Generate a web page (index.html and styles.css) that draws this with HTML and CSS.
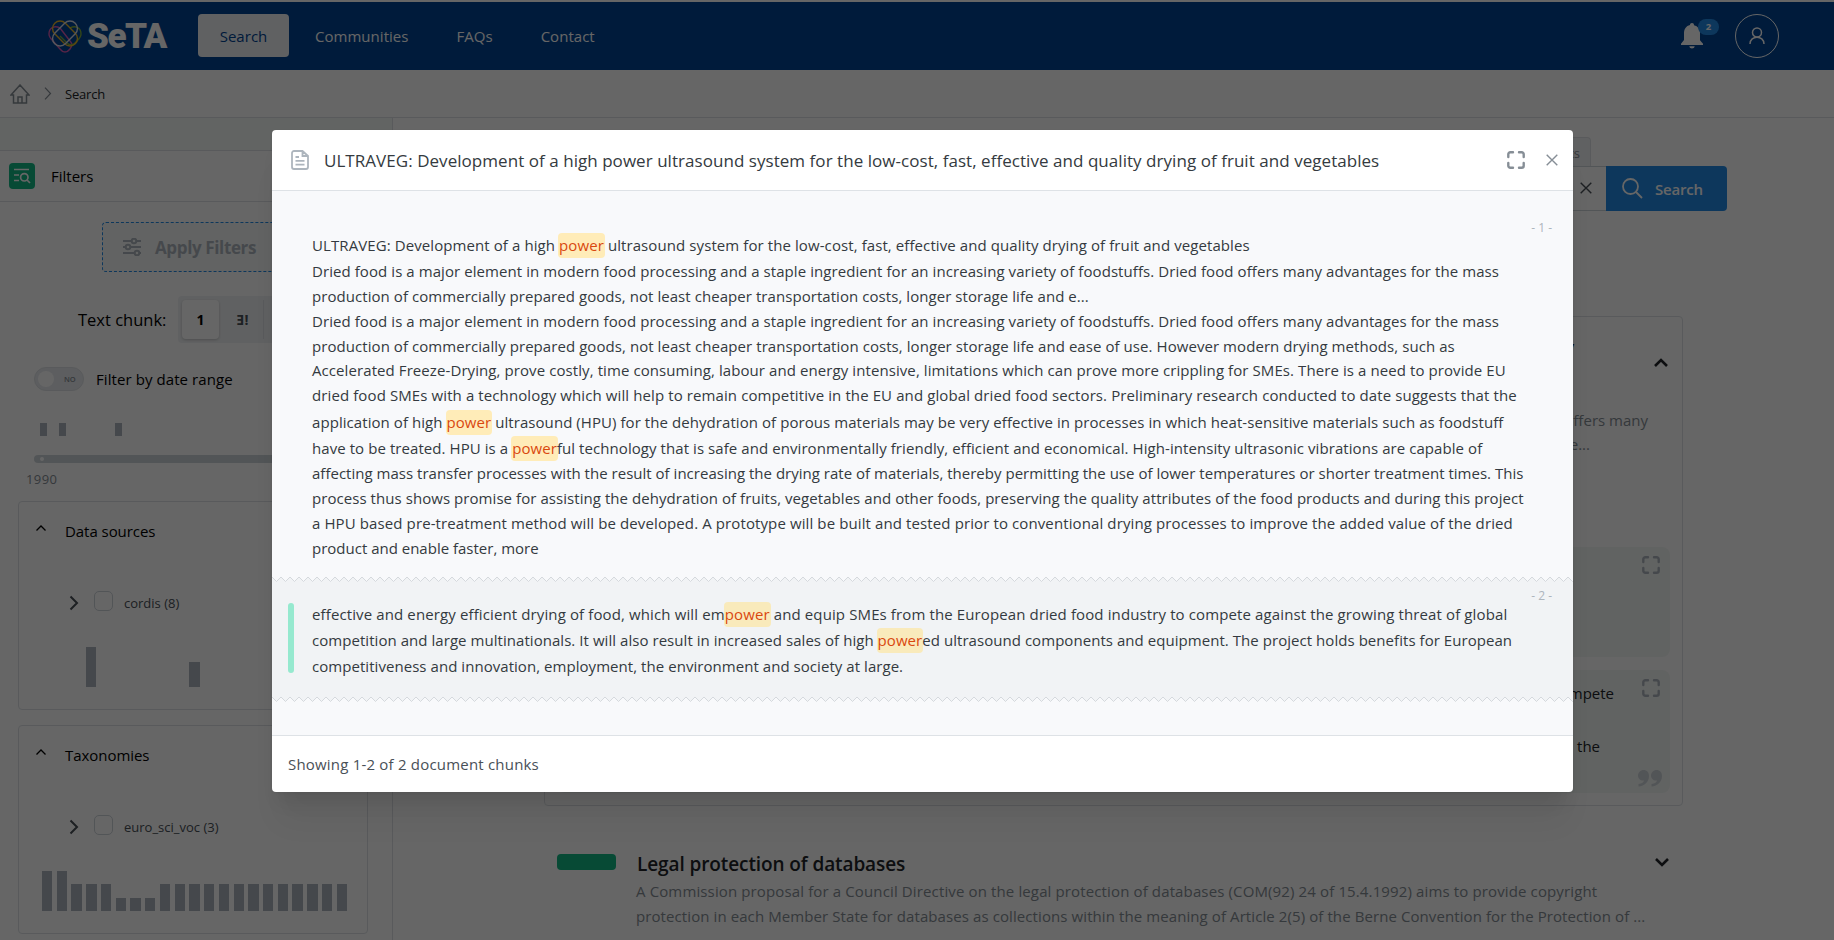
FILE: index.html
```html
<!DOCTYPE html>
<html lang="en">
<head>
<meta charset="utf-8">
<title>SeTA - Search</title>
<link rel="stylesheet" href="styles.css">
</head>
<body>
<svg width="0" height="0" class="defs" aria-hidden="true">
  <defs>
    <symbol id="expand" viewBox="0 0 18 18"><path d="M1.3 6V3.3a2 2 0 0 1 2-2H6M12 1.3h2.7a2 2 0 0 1 2 2V6M16.700 12v2.700a2 2 0 0 1-2 2H12M6 16.700H3.300a2 2 0 0 1-2-2V12" fill="none" stroke="currentColor" stroke-width="2.4" stroke-linecap="round"/></symbol>
    <symbol id="chev-up" viewBox="0 0 12 8"><path d="M1.500 6.500 6 2l4.500 4.500" fill="none" stroke="currentColor" stroke-width="1.300"/></symbol>
    <symbol id="chev-right" viewBox="0 0 10 16"><path d="M1.500 1.500 8 8l-6.500 6.500" fill="none" stroke="currentColor" stroke-width="2"/></symbol>
    <symbol id="cross" viewBox="0 0 12 12"><path d="M.7.7l10.600 10.600M11.300.7.7 11.300" fill="none" stroke="currentColor" stroke-width="1.400"/></symbol>
    <pattern id="zig" width="9" height="8" patternUnits="userSpaceOnUse"><path d="M-1 1.500 0 2l4.500 4.500L9 2l1 1" fill="none" stroke="#d5d9dd" stroke-width="1"/></pattern>
    <pattern id="fill-grey" width="9" height="8" patternUnits="userSpaceOnUse"><path d="M0 8V2l4.500 4.500L9 2v6z" fill="#f1f3f5"/></pattern>
    <pattern id="fill-light" width="9" height="8" patternUnits="userSpaceOnUse"><path d="M0 8V2l4.500 4.500L9 2v6z" fill="#f8f9fb"/></pattern>
  </defs>
</svg>
<div class="app">
  <header class="topbar">
    <div class="brand">
      <svg class="knot" viewBox="0 0 34 34" fill="none" stroke-width="1.400">
        <path d="M12 8C6 5 1 8 1 14c0 3 2 5 4 7l7 8c3 4 7 4 10 0 3-4 2-6 0-8L12 8" stroke="#d65bb0"/>
        <path d="M22 8c6-3 11 0 11 6 0 3-2 5-4 7-3 4-7 5-10 2l-7-7" stroke="#7fae3c"/>
        <rect x="2.500" y="6" width="29" height="15" rx="7.500" transform="rotate(45 17 13.500)" stroke="#e5b32c"/>
        <rect x="2.500" y="6" width="29" height="15" rx="7.500" transform="rotate(-45 17 13.500)" stroke="#d9dde6"/>
      </svg>
      <span class="wordmark">SeTA</span>
    </div>
    <nav class="nav">
      <a class="nav-item active">Search</a>
      <a class="nav-item">Communities</a>
      <a class="nav-item">FAQs</a>
      <a class="nav-item">Contact</a>
    </nav>
    <div class="account">
      <div class="bell">
        <svg viewBox="0 0 22 26" width="22" height="26"><path d="M11 0c1.300 0 2 .8 2 2.200 4 1 6 4 6 8v7l3 3.500V22H0v-1.300L3 17v-7c0-4 2-7 6-8C9 .8 9.700 0 11 0zM8.300 23.300h5.400c-.5 3-4.900 3-5.400 0z" fill="#fff"/></svg>
        <span class="count">2</span>
      </div>
      <div class="avatar"><svg viewBox="0 0 16 18" width="16" height="18" fill="none" stroke="#fff" stroke-width="1.500"><circle cx="8" cy="5.500" r="4.500"/><path d="M1 17c0-9 14-9 14 0"/></svg></div>
    </div>
  </header>
  <div class="crumbs">
    <svg viewBox="0 0 20 20" width="20" height="20" fill="none" stroke="#868e96" stroke-width="1.500"><path d="M10 1 1 11h2.500v8h13v-8H19zM8 19v-6h4v6"/></svg>
    <svg class="sep" viewBox="0 0 8 13" width="8" height="13" fill="none" stroke="#868e96" stroke-width="1.200"><path d="m1 .7 5.500 5.800L1 12.300"/></svg>
    <span>Search</span>
  </div>
  <div class="columns">
    <aside class="sidebar">
      <div class="side-top"></div>
      <div class="side-head">
        <span class="filter-badge"><svg viewBox="0 0 18 16" width="18" height="16" fill="none" stroke="#fff" stroke-width="1.700"><path d="M1 1.500h15M1 7h5M1 12.500h5"/><circle cx="11.300" cy="9.300" r="3.700"/><path d="m14 12 3 3"/></svg></span>
        <span>Filters</span>
      </div>
      <div class="apply">
        <svg viewBox="0 0 18 18" width="18" height="18" fill="none" stroke="currentColor" stroke-width="2"><path d="M0 3h8M14 3h4M0 9h2M8 9h10M0 15h11M17 15h1"/><circle cx="11" cy="3" r="2.300"/><circle cx="5" cy="9" r="2.300"/><circle cx="14" cy="15" r="2.300"/></svg>
        <span>Apply Filters</span>
      </div>
      <div class="chunk-row">
        <span class="chunk-label">Text chunk:</span>
        <div class="segmented"><span class="seg on">1</span><span class="seg">Ǝ!</span><span class="seg last"></span></div>
      </div>
      <div class="date-row"><span class="toggle"><i></i>NO</span><span class="date-label">Filter by date range</span></div>
      <div class="histo"><i class="h1"></i><i class="h2"></i><i class="h3"></i></div>
      <div class="track"><i></i></div>
      <div class="year">1990</div>
      <section class="panel">
        <div class="panel-head"><svg width="12" height="8"><use href="#chev-up"/></svg><span>Data sources</span></div>
        <div class="tree"><svg width="10" height="16"><use href="#chev-right"/></svg><i></i><span>cordis (8)</span></div>
        <div class="bars sparse"><i class="tall"></i><i class="mid"></i></div>
      </section>
      <section class="panel">
        <div class="panel-head"><svg width="12" height="8"><use href="#chev-up"/></svg><span>Taxonomies</span></div>
        <div class="tree"><svg width="10" height="16"><use href="#chev-right"/></svg><i></i><span>euro_sci_voc (3)</span></div>
        <div class="bars many"><i class="tall"></i><i class="tall"></i><i></i><i></i><i></i><i class="low"></i><i class="low"></i><i class="low"></i><i></i><i></i><i></i><i></i><i></i><i></i><i></i><i></i><i></i><i></i><i></i><i></i><i></i></div>
      </section>
    </aside>
    <main class="main">
      <div class="tabs"><span class="tab">documents</span></div>
      <div class="searchbar">
        <div class="field"><svg width="12" height="12"><use href="#cross"/></svg></div>
        <div class="go"><svg viewBox="0 0 21 21" width="21" height="21" fill="none" stroke="#fff" stroke-width="1.800"><circle cx="8.500" cy="8.500" r="7.500"/><path d="m14 14 6 6"/></svg><span>Search</span></div>
      </div>
      <article class="result open">
        <div class="result-row"><h3>quality</h3>
        <svg class="fold" viewBox="0 0 14 9" width="14" height="9"><path d="m1 8 6-6 6 6" fill="none" stroke="#212529" stroke-width="2.600"/></svg></div>
        <p class="teaser first">offers many</p>
        <p class="teaser second">e...</p>
        <div class="quote q1"><svg width="18" height="18"><use href="#expand"/></svg></div>
        <div class="quote q2"><svg width="18" height="18"><use href="#expand"/></svg>
          <p class="qa">compete</p><p class="qb">the</p>
          <svg class="marks" viewBox="0 0 24 17" width="24" height="17"><path d="M5.500 0C9 0 11 2.500 11 6c0 6-4.500 10-10.500 10.500V14C4 13.500 6 12 6 10.500 2.500 11 0 8.500 0 5.500 0 2.500 2.500 0 5.500 0zM18.500 0C22 0 24 2.500 24 6c0 6-4.500 10-10.500 10.500V14c3.500-.5 5.500-2 5.500-3.500-3.500.5-6-2-6-5C13 2.500 15.500 0 18.500 0z" fill="#ced4da"/></svg></div>
      </article>
      <article class="result closed">
        <i class="chip"></i>
        <div class="text"><h3>Legal protection of databases</h3>
          <p class="c1">A Commission proposal for a Council Directive on the legal protection of databases (COM(92) 24 of 15.4.1992) aims to provide copyright</p>
          <p class="c2">protection in each Member State for databases as collections within the meaning of Article 2(5) of the Berne Convention for the Protection of ...</p></div>
        <svg class="fold" viewBox="0 0 14 9" width="14" height="9"><path d="m1 1 6 6 6-6" fill="none" stroke="#212529" stroke-width="2.600"/></svg>
      </article>
    </main>
  </div>
</div>
<div class="overlay">
  <div class="modal">
    <div class="modal-head">
      <svg class="doc" viewBox="0 0 18 20" width="18" height="20" fill="none" stroke="#adb5bd" stroke-width="1.800"><path d="M11.500 1H3a2 2 0 0 0-2 2v14a2 2 0 0 0 2 2h12a2 2 0 0 0 2-2V6zM11.500 1v5H17M4.500 7H8M4.500 10.800h9M4.500 14.600h9"/></svg>
      <h2>ULTRAVEG: Development of a high power ultrasound system for the low-cost, fast, effective and quality drying of fruit and vegetables</h2>
      <svg class="full" width="18" height="18"><use href="#expand"/></svg>
      <svg class="close" width="12" height="12"><use href="#cross"/></svg>
    </div>
    <div class="modal-body">
      <div class="chunk one">
        <span class="num">- 1 -</span>
        <div class="line hit lead w1">ULTRAVEG: Development of a high <mark>power</mark> ultrasound system for the low-cost, fast, effective and quality drying of fruit and vegetables</div>
        <div class="line w2">Dried food is a major element in modern food processing and a staple ingredient for an increasing variety of foodstuffs. Dried food offers many advantages for the mass</div>
        <div class="line w3">production of commercially prepared goods, not least cheaper transportation costs, longer storage life and e...</div>
        <div class="line w2">Dried food is a major element in modern food processing and a staple ingredient for an increasing variety of foodstuffs. Dried food offers many advantages for the mass</div>
        <div class="line w5">production of commercially prepared goods, not least cheaper transportation costs, longer storage life and ease of use. However modern drying methods, such as</div>
        <div class="line w6">Accelerated Freeze-Drying, prove costly, time consuming, labour and energy intensive, limitations which can prove more crippling for SMEs. There is a need to provide EU</div>
        <div class="line w7">dried food SMEs with a technology which will help to remain competitive in the EU and global dried food sectors. Preliminary research conducted to date suggests that the</div>
        <div class="line hit w8">application of high <mark>power</mark> ultrasound (HPU) for the dehydration of porous materials may be very effective in processes in which heat-sensitive materials such as foodstuff</div>
        <div class="line hit w9">have to be treated. HPU is a <mark>power</mark>ful technology that is safe and environmentally friendly, efficient and economical. High-intensity ultrasonic vibrations are capable of</div>
        <div class="line w10">affecting mass transfer processes with the result of increasing the drying rate of materials, thereby permitting the use of lower temperatures or shorter treatment times. This</div>
        <div class="line w11">process thus shows promise for assisting the dehydration of fruits, vegetables and other foods, preserving the quality attributes of the food products and during this project</div>
        <div class="line w12">a HPU based pre-treatment method will be developed. A prototype will be built and tested prior to conventional drying processes to improve the added value of the dried</div>
        <div class="line w13">product and enable faster, more</div>
      </div>
      <svg width="1301" height="8"><rect width="1301" height="8" fill="url(#fill-grey)"/><rect width="1301" height="8" fill="url(#zig)"/></svg>
      <div class="chunk two">
        <i class="marker"></i>
        <span class="num">- 2 -</span>
        <div class="line w14">effective and energy efficient drying of food, which will em<mark>power</mark> and equip SMEs from the European dried food industry to compete against the growing threat of global</div>
        <div class="line w15">competition and large multinationals. It will also result in increased sales of high <mark>power</mark>ed ultrasound components and equipment. The project holds benefits for European</div>
        <div class="line w16">competitiveness and innovation, employment, the environment and society at large.</div>
      </div>
      <svg width="1301" height="8"><rect width="1301" height="8" fill="#f1f3f5"/><rect width="1301" height="8" fill="url(#fill-light)"/><rect width="1301" height="8" fill="url(#zig)"/></svg>
    </div>
    <div class="modal-foot">Showing 1-2 of 2 document chunks</div>
  </div>
</div>
</body>
</html>
```
FILE: styles.css
```css
* { box-sizing: border-box; }
body { margin: 0; width: 1834px; height: 940px; overflow: hidden; background: #fff; font-family: "Open Sans", "Noto Sans", sans-serif; font-size: 15px; color: #000; }
h2, h3, p { margin: 0; font-weight: 400; }
svg { display: block; flex: none; }
.defs { position: absolute; }
i { display: block; }
.app { height: 940px; overflow: hidden; }

.topbar { margin-top: 2px; height: 68px; background: #004494; display: flex; align-items: center; padding: 0 55px 0 48px; }
.brand { display: flex; align-items: center; gap: 5px; width: 150px; padding-top: 1px; }
.knot { width: 34px; height: 34px; }
.wordmark { font: 900 35px/36px Roboto, sans-serif; color: #fff; letter-spacing: -1.5px; }
.nav { display: flex; align-items: center; color: #fff; margin-top: -1px; }
.nav-item { height: 43px; line-height: 44px; letter-spacing: 0.030px; padding: 0 24px; }
.nav-item.active { width: 91px; padding: 0; text-align: center; background: #f1f3f5; color: #004494; border-radius: 4px; margin-right: 2px; }
.account { margin-left: auto; display: flex; align-items: center; }
.bell { position: relative; width: 54px; }
.count { position: absolute; left: 17px; top: -4px; width: 21px; height: 16px; border-radius: 8px; background: #228be6; color: #fff; font: 700 9.500px/16px "Open Sans", sans-serif; text-align: center; }
.avatar { width: 44px; height: 44px; border: 1px solid #fff; border-radius: 50%; display: flex; align-items: center; justify-content: center; padding-right: 1px; }

.crumbs { height: 48px; border-bottom: 1px solid #dee2e6; display: flex; align-items: center; padding-left: 10px; font-size: 13px; color: #212529; letter-spacing: -0.2px; }
.crumbs .sep { margin: 0 13px 0 14px; }

.columns { display: flex; height: 822px; }
.sidebar { width: 393px; border-right: 1px solid #dee2e6; flex: none; }
.side-top { height: 33px; background: #f5f9f8; border-bottom: 1px solid #dee2e6; }
.side-head { height: 51px; border-bottom: 1px solid #dee2e6; display: flex; align-items: center; gap: 16px; padding-left: 9px; }
.filter-badge { width: 26px; height: 26px; border-radius: 4px; background: #12b886; display: flex; align-items: center; justify-content: center; }
.apply { margin: 20px 0 0 102px; width: 188px; height: 50px; border: 1px dashed #228be6; border-radius: 4px; background: #f5f8f7; color: #adb5bd; display: flex; align-items: center; gap: 14px; padding-left: 20px; font-size: 17px; font-weight: 700; letter-spacing: -0.370px; }
.chunk-row { margin-top: 24px; display: flex; align-items: center; padding-left: 78px; }
.chunk-label { width: 100px; font-size: 16.500px; }
.segmented { height: 47px; width: 160px; background: #f1f3f5; border-radius: 4px; padding: 4px; display: flex; font-size: 14px; font-weight: 700; color: #495057; }
.seg { width: 45px; line-height: 39px; text-align: center; border-right: 1px solid #dee2e6; padding-left: 3px; }
.seg.on { width: 37px; background: #fff; color: #000; border: 0; border-radius: 4px; padding: 0; box-shadow: 0 1px 3px rgba(0,0,0,.2); }
.seg.last { border: 0; }
.date-row { margin-top: 24px; display: flex; align-items: center; padding-left: 34px; gap: 12px; height: 24px; }
.toggle { width: 50px; height: 24px; border-radius: 12px; border: 1px solid #dee2e6; background: #e9ecef; display: flex; align-items: center; gap: 10px; padding-left: 3px; font-size: 7.500px; font-weight: 600; color: #868e96; }
.toggle i { width: 16px; height: 16px; border-radius: 50%; background: #fff; }
.date-label { letter-spacing: 0.080px; }
.histo { margin: 32px 0 0 40px; height: 13px; display: flex; }
.histo i { width: 7px; background: #adb5bd; }
.histo .h2 { margin-left: 12px; }
.histo .h3 { margin-left: 49px; }
.track { margin: 19px 0 0 34px; height: 8px; width: 324px; border-radius: 4px; background: #ced4da; padding: 2px 6px; }
.track i { width: 4px; height: 4px; border-radius: 50%; background: #fff; }
.year { margin: 7px 0 0 26px; font-size: 13px; line-height: 18px; color: #868e96; letter-spacing: 0.400px; height: 31px; }
.panel { margin: 0 0 15px 18px; width: 350px; height: 209px; border: 1px solid #dee2e6; border-radius: 4px; }
.panel-head { display: flex; align-items: center; gap: 18px; padding: 16px 0 0 16px; height: 42px; letter-spacing: -0.050px; }
.panel-head svg { margin-top: -6px; }
.tree { display: flex; align-items: center; padding-left: 50px; margin-top: 47px; height: 24px; font-size: 13px; color: #495057; }
.tree i { width: 19px; height: 20px; border: 1.500px solid #ced4da; border-radius: 5px; margin: -4px 11px 0 15px; }
.bars { display: flex; align-items: flex-end; height: 40px; margin-top: 32px; padding-left: 23px; }
.bars i { background: #adb5bd; width: 10.300px; height: 27px; flex: none; }
.bars .tall { height: 40px; }
.bars .low { height: 13px; }
.bars .mid { height: 25px; }
.bars.many { gap: 4.450px; }
.bars.sparse { padding-left: 67px; gap: 93px; }

.main { flex: 1; padding-left: 151px; }
.tabs { margin-top: 19px; height: 29px; width: 1047px; display: flex; justify-content: flex-end; }
.tab { height: 30px; border: 1px solid #dee2e6; border-bottom: 0; border-radius: 4px 4px 0 0; background: #f1f3f5; padding: 0 10px; font-size: 13px; line-height: 31px; color: #868e96; }
.searchbar { display: flex; height: 45px; width: 1183px; }
.field { flex: 1; border: 1px solid #ced4da; border-right: 0; display: flex; align-items: center; justify-content: flex-end; padding: 0 14px 1px 0; color: #495057; }
.go { width: 121px; background: #228be6; border-radius: 0 4px 4px 0; display: flex; align-items: center; gap: 12px; padding-left: 16px; color: #fff; font-weight: 600; letter-spacing: -0.2px; }
.result.open { margin-top: 105px; width: 1139px; height: 490px; border: 1px solid #dee2e6; border-radius: 4px; padding: 0 12px; }
.result-row { display: flex; justify-content: flex-end; align-items: center; height: 95px; padding-right: 2px; }
.result-row h3 { font-size: 17px; font-weight: 600; margin-top: -37px; margin-right: 80px; color: #212529; }
.result-row .fold { margin-top: -4px; }
.teaser { text-align: right; line-height: 25px; color: #868e96; }
.teaser.first { padding-right: 22px; margin-top: -4px; }
.teaser.second { padding-right: 80px; margin-top: -1px; }
.quote { background: #f3f7f5; border-radius: 8px; padding: 9px 10px; color: #212529; text-align: right; display: flex; flex-direction: column; align-items: flex-end; }
.quote svg { color: #adb5bd; }
.q1 { height: 110px; margin-top: 90px; }
.q2 { height: 123px; margin-top: 13px; }
.qa { margin: -16px 46px 0 0; line-height: 25px; }
.qb { margin: 28px 60px 0 0; line-height: 25px; }
.q2 .marks { margin: 11px -2px 0 0; }
.result.closed { margin: 48px 0 0 13px; display: flex; height: 80px; width: 1130px; }
.chip { width: 59px; height: 16px; background: #12b886; border-radius: 4px; }
.text { width: 1019px; margin-left: 20px; color: #868e96; }
.text h3 { font-size: 19px; font-weight: 600; line-height: 26px; margin: -3px 0 2px 1px; color: #212529; letter-spacing: -0.1px; }
.text p { line-height: 25px; white-space: nowrap; }
.c1 { letter-spacing: 0.130px; }
.c2 { letter-spacing: 0.090px; }
.closed .fold { margin-top: 4px; }

.overlay { position: absolute; left: 0; top: 0; width: 1834px; height: 940px; background: rgba(0,0,0,.6); padding: 130px 0 0 272px; }
.modal { width: 1301px; height: 662px; background: #fff; border-radius: 4px; overflow: hidden; box-shadow: 0 1px 3px rgba(0,0,0,.05), 0 36px 28px -7px rgba(0,0,0,.05), 0 17px 17px -7px rgba(0,0,0,.08); color: #343a40; }
.modal-head { height: 61px; border-bottom: 1px solid #dee2e6; display: flex; align-items: center; padding: 0 15px 0 19px; color: #868e96; }
.modal-head h2 { font-size: 17px; line-height: 26px; color: #343a40; margin: 1px 0 0 15px; white-space: nowrap; flex: 1; letter-spacing: 0.045px; }
.close { margin-left: 21px; }
.modal-body { height: 545px; background: #f8f9fb; border-bottom: 1px solid #dee2e6; }
.chunk { padding-left: 40px; position: relative; }
.num { position: absolute; right: 21px; font-size: 12px; line-height: 16px; color: #adb5bd; }
.one { height: 384px; padding-top: 40px; }
.one .num { top: 29px; }
.line { height: 24.850px; line-height: 24.850px; white-space: nowrap; }
.hit { height: 26.600px; padding-top: 1.800px; }
.lead { height: 28px; }
.w1 { letter-spacing: 0.090px; }
.w2 { letter-spacing: 0.075px; }
.w3 { letter-spacing: 0.060px; }
.w5 { letter-spacing: 0.065px; }
.w6 { letter-spacing: 0.085px; }
.w7 { letter-spacing: 0.105px; }
.w8 { letter-spacing: 0.065px; }
.w9 { letter-spacing: 0.070px; }
.w10 { letter-spacing: 0.015px; }
.w11 { letter-spacing: 0.060px; }
.w12 { letter-spacing: 0.110px; }
.w14 { letter-spacing: 0.120px; }
.w15 { letter-spacing: 0.050px; }
.w16 { letter-spacing: 0.050px; }
mark { background: #ffecb8; color: #d9480f; border-radius: 4px; padding: 2px 1px 3px; margin: 0 -1px; }
.two { background: #f1f3f5; height: 112px; padding-top: 18px; }
.two .num { top: 5px; }
.two .line { height: 26.200px; line-height: 26.200px; }
.two mark { background: #f9eabb; }
.marker { position: absolute; left: 16px; top: 20px; width: 6px; height: 70px; border-radius: 3px; background: #96e9cf; }
.modal-foot { padding-left: 16px; line-height: 57px; color: #495057; letter-spacing: 0.200px; }
```
